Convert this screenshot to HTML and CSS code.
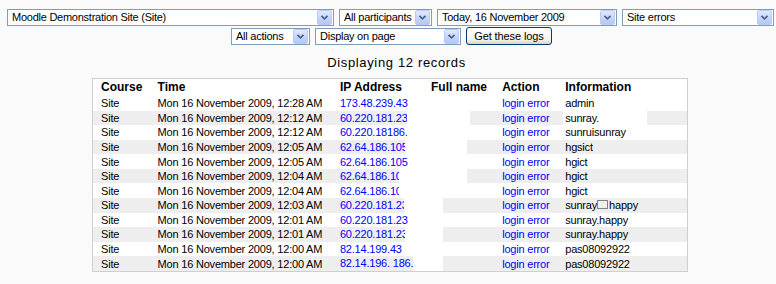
FILE: index.html
```html
<!DOCTYPE html>
<html>
<head>
<meta charset="utf-8">
<link rel="stylesheet" href="styles.css">
</head>
<body>
<div class="main">
  <form class="controls">
    <div class="row row1">
      <div class="sel s-course"><span class="val">Moodle Demonstration Site (Site)</span><span class="dd"><svg viewBox="0 0 15 15" width="15" height="15"><path d="M4 5.5 L7.5 9 L11 5.5" fill="none" stroke="#4d6185" stroke-width="2"/></svg></span></div>
      <div class="sel s-user"><span class="val">All participants</span><span class="dd"><svg viewBox="0 0 15 15" width="15" height="15"><path d="M4 5.5 L7.5 9 L11 5.5" fill="none" stroke="#4d6185" stroke-width="2"/></svg></span></div>
      <div class="sel s-date"><span class="val">Today, 16 November 2009</span><span class="dd"><svg viewBox="0 0 15 15" width="15" height="15"><path d="M4 5.5 L7.5 9 L11 5.5" fill="none" stroke="#4d6185" stroke-width="2"/></svg></span></div>
      <div class="sel s-mod"><span class="val">Site errors</span><span class="dd"><svg viewBox="0 0 15 15" width="15" height="15"><path d="M4 5.5 L7.5 9 L11 5.5" fill="none" stroke="#4d6185" stroke-width="2"/></svg></span></div>
    </div>
    <div class="row row2">
      <div class="sel s-act"><span class="val">All actions</span><span class="dd"><svg viewBox="0 0 15 15" width="15" height="15"><path d="M4 5.5 L7.5 9 L11 5.5" fill="none" stroke="#4d6185" stroke-width="2"/></svg></span></div>
      <div class="sel s-fmt"><span class="val">Display on page</span><span class="dd"><svg viewBox="0 0 15 15" width="15" height="15"><path d="M4 5.5 L7.5 9 L11 5.5" fill="none" stroke="#4d6185" stroke-width="2"/></svg></span></div>
      <button type="button" class="btn">Get these logs</button>
    </div>
  </form>

  <div class="count">Displaying 12 records</div>

  <table class="logtable">
    <colgroup>
      <col class="c1"><col class="c2"><col class="c3"><col class="c4"><col class="c5"><col class="c6">
    </colgroup>
    <thead>
      <tr><th class="first">Course</th><th>Time</th><th>IP Address</th><th>Full name</th><th>Action</th><th>Information</th></tr>
    </thead>
    <tbody>
      <tr class="r0"><td class="first">Site</td><td>Mon 16 November 2009, 12:28 AM</td><td><a class="ip">173.48.239.43</a></td><td></td><td><a>login error</a></td><td>admin</td></tr>
      <tr class="r1"><td class="first">Site</td><td>Mon 16 November 2009, 12:12 AM</td><td class="cut"><a class="ip clip" style="width:67px">60.220.181.23</a></td><td><span class="wipe" style="width:43px"></span></td><td><a>login error</a></td><td><span class="infowipe">sunray.</span></td></tr>
      <tr class="r0"><td class="first">Site</td><td>Mon 16 November 2009, 12:12 AM</td><td><a class="ip">60.220.18186.</a></td><td></td><td><a>login error</a></td><td>sunruisunray</td></tr>
      <tr class="r1"><td class="first">Site</td><td>Mon 16 November 2009, 12:05 AM</td><td class="cut"><a class="ip clip" style="width:65px">62.64.186.105</a></td><td><span class="wipe" style="width:40px"></span></td><td><a>login error</a></td><td>hgsict</td></tr>
      <tr class="r0"><td class="first">Site</td><td>Mon 16 November 2009, 12:05 AM</td><td><a class="ip">62.64.186.105</a></td><td></td><td><a>login error</a></td><td>hgict</td></tr>
      <tr class="r1"><td class="first">Site</td><td>Mon 16 November 2009, 12:04 AM</td><td class="cut"><a class="ip clip" style="width:59px">62.64.186.105</a></td><td><span class="wipe" style="width:40px"></span></td><td><a>login error</a></td><td>hgict</td></tr>
      <tr class="r0"><td class="first">Site</td><td>Mon 16 November 2009, 12:04 AM</td><td><a class="ip clip" style="width:59px">62.64.186.105</a></td><td></td><td><a>login error</a></td><td>hgict</td></tr>
      <tr class="r1"><td class="first">Site</td><td>Mon 16 November 2009, 12:03 AM</td><td class="cut"><a class="ip clip" style="width:64px">60.220.181.23</a></td><td><span class="wipe" style="width:16px"></span></td><td><a>login error</a></td><td>sunray<span class="tofu"></span>happy</td></tr>
      <tr class="r0"><td class="first">Site</td><td>Mon 16 November 2009, 12:01 AM</td><td><a class="ip clip" style="width:72px">60.220.181.23</a></td><td></td><td><a>login error</a></td><td>sunray.happy</td></tr>
      <tr class="r1"><td class="first">Site</td><td>Mon 16 November 2009, 12:01 AM</td><td class="cut"><a class="ip clip" style="width:65px">60.220.181.23</a></td><td><span class="wipe" style="width:16px"></span></td><td><a>login error</a></td><td>sunray.happy</td></tr>
      <tr class="r0"><td class="first">Site</td><td>Mon 16 November 2009, 12:00 AM</td><td><a class="ip">82.14.199.43</a></td><td></td><td><a>login error</a></td><td>pas08092922</td></tr>
      <tr class="r1"><td class="first">Site</td><td>Mon 16 November 2009, 12:00 AM</td><td class="cut"><a class="ip">82.14.196. 186.</a></td><td><span class="wipe" style="width:16px"></span></td><td><a>login error</a></td><td>pas08092922</td></tr>
    </tbody>
  </table>
</div>
</body>
</html>
```

FILE: styles.css
```css
html, body {
  margin: 0;
  padding: 0;
  background: #fafafa;
  font-family: "Liberation Sans", Arial, sans-serif;
  color: #000;
}

.main {
  padding-left: 4px;
}

.controls {
  margin: 0;
  padding-top: 9px;
}

.row {
  display: flex;
  gap: 5px;
}

.row1 {
  padding-left: 3px;
}

.row2 {
  margin-top: 1px;
  justify-content: center;
  align-items: flex-end;
  padding-left: 3px;
}

.sel {
  box-sizing: border-box;
  height: 17px;
  border: 1px solid #7f9db9;
  background: #fff;
  display: flex;
  align-items: center;
  justify-content: space-between;
  padding: 0 1px 0 4px;
  font-size: 11px;
  letter-spacing: -0.25px;
  white-space: nowrap;
  overflow: hidden;
}

.val {
  line-height: 15px;
}

.s-course { width: 327px; }
.s-user { width: 93px; }
.s-date { width: 180px; }
.s-mod { width: 152px; }
.s-act { width: 79px; }
.s-fmt { width: 146px; }

.dd {
  box-sizing: border-box;
  width: 15px;
  height: 15px;
  flex: none;
  border: 1px solid #b9cbf3;
  border-radius: 2px;
  background: linear-gradient(#e1e9fd, #c2d3fa 60%, #b4c8f5);
  display: flex;
  align-items: center;
  justify-content: center;
}

.dd svg {
  display: block;
  width: 13px;
  height: 13px;
}

.btn {
  box-sizing: border-box;
  width: 86px;
  height: 18px;
  margin: 0;
  padding: 0;
  border: 1px solid #003c74;
  border-radius: 3px;
  background: linear-gradient(#ffffff, #f4f3ee 70%, #e3e0d6 90%, #d6d0c5);
  font-family: "Liberation Sans", Arial, sans-serif;
  font-size: 11px;
  letter-spacing: -0.1px;
  color: #000;
  line-height: 16px;
}

.count {
  margin-top: 10px;
  padding-left: 13px;
  text-align: center;
  font-size: 13px;
  letter-spacing: 0.65px;
  line-height: 15px;
  height: 15px;
  margin-bottom: 8px;
}

.logtable {
  margin: 0 auto;
  width: 596px;
  table-layout: fixed;
  border-collapse: collapse;
  border: 1px solid #cfcfcf;
  background: #fff;
}

.c1 { width: 61px; }
.c2 { width: 182px; }
.c3 { width: 91px; }
.c4 { width: 71px; }
.c5 { width: 63px; }
.c6 { width: 126px; }

.logtable th {
  height: 17px;
  padding: 0 0 0 4px;
  font-size: 12px;
  font-weight: bold;
  text-align: left;
  vertical-align: middle;
  line-height: 17px;
  white-space: nowrap;
}

.logtable td {
  box-sizing: border-box;
  height: 14.58px;
  padding: 0 0 0 4px;
  font-size: 11px;
  letter-spacing: -0.2px;
  line-height: 14px;
  vertical-align: middle;
  white-space: nowrap;
  overflow: hidden;
}

.logtable th.first,
.logtable td.first {
  padding-left: 8px;
}

.r0 { background: #fff; }
.r1 { background: #eeeeee; }

.logtable a {
  color: #0000ff;
  text-decoration: none;
}

.ip {
  display: inline-block;
  vertical-align: top;
}

.ip.clip {
  overflow: hidden;
  white-space: nowrap;
}

.logtable td.cut {
  background: #fff;
  padding-left: 0;
  vertical-align: top;
}

.logtable td.cut .ip {
  background: #eeeeee;
  padding-left: 4px;
  height: 14.58px;
  line-height: 14.58px;
}

.wipe {
  display: inline-block;
  vertical-align: top;
  height: 14.58px;
  margin-left: -4px;
  background: #fff;
}

.infowipe {
  display: inline-block;
  box-sizing: border-box;
  width: 84px;
  margin-left: -2px;
  padding-left: 2px;
  background: #fff;
}

.tofu {
  display: inline-block;
  box-sizing: border-box;
  width: 11px;
  height: 9px;
  border: 1px solid #808080;
  margin: 0 1px 0 0;
}
```
